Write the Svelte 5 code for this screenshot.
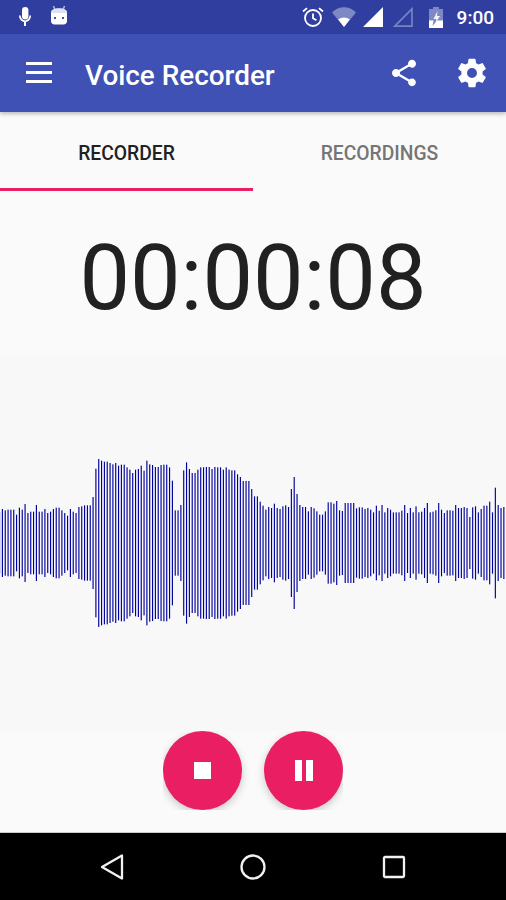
<script>
  // bar tops measured in 3x crops, relative to the crop; 280 is the centre line
  const tops = [
    188,178,182,180,180,180,195,174,180,163,190,186,186,166,186,186,178,190,186,178,174,174,182,190,198,178,186,190,172,170,167,167,167,142,57,28,33,36,36,40,44,40,48,45,45,53,60,70,60,58,48,63,33,44,46,52,52,46,45,45,53,
    93,182,182,166,62,38,58,70,70,60,53,53,52,52,58,52,53,53,60,53,60,62,62,74,82,94,94,94,118,140,140,156,168,180,172,175,162,175,178,170,167,172,118,82,133,166,172,172,185,172,176,185,195,195,185,158,158,162,154,182,184,
    160,160,160,160,176,173,173,178,175,180,188,168,183,166,188,175,180,188,188,188,183,166,190,175,188,170,188,186,175,160,188,186,182,160,180,190,182,182,183,166,175,175,172,175,202,173,170,188,178,168,168,156,188,114,166,175,172
  ];
  const pitch = 2.833;
  const bars = tops.map((t, i) => ({ x: i * pitch - 1, h: ((280 - t) * 2) / 3 }));
</script>

<div class="phone">
  <div class="status">
    <svg class="ic" width="24" height="24" viewBox="0 0 24 24" fill="#fff"><rect x="9" y="2" width="6.4" height="12.4" rx="3.2"/><path d="M6 10.5c0 3.6 2.6 6 5 6.4V21h2v-4.1c2.6-.4 5-2.800 5-6.400h-1.600c0 2.900-2.300 4.900-4.300 4.900S7.700 13.400 7.700 10.500z"/></svg>
    <svg class="ic droid" width="20" height="24" viewBox="0 0 20 24"><path d="M4.500 2l1.500 4M15.500 2l-1.500 4" stroke="#b9c0e4" stroke-width="1.400"/><path d="M2 9c0-3 2.500-4.500 8-4.500S18 6 18 9v8c0 2-1.500 3.500-3.500 3.500h-9C3.500 20.500 2 19 2 17z" fill="#fff"/><path d="M2 9c0-3 2.500-4.500 8-4.500S18 6 18 9z" fill="#dfe2f3"/><rect x="5" y="13" width="2" height="2" fill="#3f51b5"/><rect x="13" y="13" width="2" height="2" fill="#3f51b5"/></svg>
    <div class="spacer"></div>
    <svg class="ic alarm" width="22" height="24" viewBox="0 0 22 24" fill="none" stroke="#fff" stroke-width="1.800"><circle cx="11" cy="13" r="8"/><path d="M11 8.500V13.300l3.400 2M1 6.500l4-3.400M21 6.500l-4-3.400"/></svg>
    <svg class="ic wifi" width="24" height="20" viewBox="0 0 26 20" preserveAspectRatio="none"><path d="M0 5.500C7-1.500 19-1.500 26 5.500L13 20z" fill="#fff" fill-opacity=".38"/><path d="M6.700 12.500c3.600-2.800 9-2.800 12.600 0L13 20z" fill="#fff"/></svg>
    <svg class="ic sig" width="20" height="20" viewBox="0 0 20 20"><path d="M20 0v20H0z" fill="#fff"/></svg>
    <svg class="ic sig2" width="20" height="20" viewBox="0 0 20 20"><path d="M19 1.800v17.400H1.800z" fill="none" stroke="#fff" stroke-opacity=".35" stroke-width="1.700"/></svg>
    <svg class="ic batt" width="14" height="21" viewBox="0 0 14 21"><path d="M4 0h6v2h4v19H0V2h4z" fill="#fff" fill-opacity=".38"/><path d="M0 13.500h4.500L3.500 19l4.800-5.500H14V21H0z" fill="#fff"/><path d="M8.500 4L4.500 12h3l-1 4 4.500-7H8z" fill="#fff" fill-opacity=".9"/></svg>
    <span class="time">9:00</span>
  </div>

  <header class="bar">
    <button class="menu" aria-label="Menu"><span></span><span></span><span></span></button>
    <h1>Voice Recorder</h1>
    <svg class="share" width="32" height="32" viewBox="0 0 24 24" fill="#fff"><path d="M18 16.080c-.76 0-1.440.3-1.960.77L8.910 12.700c.05-.23.09-.46.09-.7s-.04-.47-.09-.7l7.050-4.110c.54.5 1.250.81 2.040.81 1.660 0 3-1.340 3-3s-1.340-3-3-3-3 1.340-3 3c0 .24.04.47.09.7L8.040 9.810C7.500 9.310 6.790 9 6 9c-1.660 0-3 1.340-3 3s1.340 3 3 3c.79 0 1.500-.31 2.040-.81l7.120 4.160c-.05.21-.08.43-.08.65 0 1.610 1.310 2.920 2.920 2.920 1.610 0 2.920-1.310 2.920-2.920s-1.310-2.920-2.920-2.920z"/></svg>
    <svg class="gear" width="34" height="34" viewBox="0 0 24 24" fill="#fff"><path d="M19.430 12.980c.04-.32.070-.64.070-.98s-.03-.66-.07-.98l2.110-1.650c.19-.15.24-.42.120-.64l-2-3.460c-.12-.22-.39-.3-.61-.22l-2.490 1c-.52-.4-1.080-.73-1.690-.98l-.38-2.650C14.460 2.180 14.250 2 14 2h-4c-.25 0-.46.18-.49.42l-.38 2.650c-.61.25-1.170.59-1.690.98l-2.490-1c-.23-.09-.49 0-.61.22l-2 3.460c-.13.22-.07.49.12.64l2.110 1.650c-.04.32-.07.65-.07.98s.03.66.07.98l-2.110 1.650c-.19.15-.24.42-.12.64l2 3.460c.12.22.39.3.61.22l2.490-1c.52.4 1.080.73 1.690.98l.38 2.650c.03.24.24.42.49.42h4c.25 0 .46-.18.49-.42l.38-2.650c.61-.25 1.170-.59 1.690-.98l2.490 1c.23.09.49 0 .61-.22l2-3.460c.12-.22.07-.49-.12-.64l-2.110-1.650zM12 15.500c-1.930 0-3.500-1.570-3.500-3.500s1.570-3.500 3.500-3.500 3.500 1.570 3.500 3.500-1.570 3.500-3.500 3.500z"/></svg>
  </header>

  <nav class="tabs">
    <div class="tab active">RECORDER</div>
    <div class="tab">RECORDINGS</div>
  </nav>

  <div class="timer">00:00:08</div>

  <div class="wave">
    <svg width="506" height="376" viewBox="0 0 506 376">
      {#each bars as b}
        <rect x={b.x} y={188 - b.h / 2} width="1.150" height={b.h} fill="#00009c" />
      {/each}
    </svg>
  </div>

  <div class="controls">
    <div class="fabs">
      <button class="fab" aria-label="Stop"><span class="stop"></span></button>
      <button class="fab" aria-label="Pause"><span class="pause"></span><span class="pause"></span></button>
    </div>
  </div>

  <footer class="nav">
    <svg width="26" height="28" viewBox="0 0 26 28" fill="none" stroke="#f2f2f2" stroke-width="2.300" stroke-linejoin="round"><path d="M23 2.500v23L3 14z"/></svg>
    <svg width="28" height="28" viewBox="0 0 28 28" fill="none" stroke="#f2f2f2" stroke-width="2.300"><circle cx="14" cy="14" r="11.500"/></svg>
    <svg width="26" height="26" viewBox="0 0 26 26" fill="none" stroke="#f2f2f2" stroke-width="2.300" stroke-linejoin="round"><rect x="3" y="3" width="20" height="20" rx="1"/></svg>
  </footer>
</div>

<style>
  :global(body) {
    margin: 0;
  }
  .phone {
    width: 506px;
    height: 900px;
    display: flex;
    flex-direction: column;
    background: #fafafa;
    font-family: Roboto, sans-serif;
    overflow: hidden;
  }
  .status {
    height: 34px;
    flex: none;
    display: flex;
    align-items: center;
    background: #303f9f;
    padding: 0 12px 0 13px;
    color: #fff;
  }
  .ic {
    flex: none;
  }
  .droid {
    margin: 0 0 2px 12px;
  }
  .spacer {
    flex: 1;
  }
  .wifi {
    margin-left: 8px;
  }
  .sig {
    margin-left: 7px;
  }
  .sig2 {
    margin-left: 10px;
  }
  .batt {
    margin-left: 16px;
  }
  .time {
    margin-left: 14px;
    font-size: 19px;
    font-weight: 500;
  }
  .bar {
    height: 78px;
    flex: none;
    display: flex;
    align-items: center;
    background: #3f51b5;
    box-shadow: 0 2px 4px rgba(0, 0, 0, 0.25);
    color: #fff;
    position: relative;
  }
  .menu {
    width: 26px;
    margin: 0 0 2px 26px;
    padding: 0;
    border: none;
    background: none;
    display: flex;
    flex-direction: column;
    gap: 6px;
  }
  .menu span {
    height: 3px;
    background: #fff;
  }
  h1 {
    margin: 0 0 0 33px;
    padding-top: 4px;
    flex: 1;
    font-size: 27.900px;
    font-weight: 500;
  }
  .share {
    margin-right: 35px;
  }
  .gear {
    margin-right: 17px;
  }
  .tabs {
    height: 79px;
    flex: none;
    display: grid;
    grid-template-columns: 1fr 1fr;
  }
  .tab {
    display: flex;
    align-items: center;
    justify-content: center;
    font-size: 19.300px;
    font-weight: 500;
    color: #757575;
    padding: 6px 0 3px;
  }
  .tab.active {
    color: #212121;
    border-bottom: 3px solid #e91e63;
    padding-bottom: 0;
  }
  .timer {
    height: 164px;
    flex: none;
    display: flex;
    align-items: center;
    justify-content: center;
    font-size: 90px;
    color: #212121;
    padding-top: 10px;
    box-sizing: border-box;
  }
  .wave {
    height: 376px;
    flex: none;
    background: #f8f8f8;
  }
  .wave svg {
    display: block;
  }
  .controls {
    flex: 1;
    display: flex;
    justify-content: center;
    align-items: flex-start;
  }
  .fabs {
    width: 180px;
    height: 79px;
    display: flex;
    justify-content: space-between;
    overflow: hidden;
  }
  .fab {
    width: 79px;
    height: 79px;
    padding: 0;
    border: none;
    border-radius: 50%;
    background: #e91e63;
    box-shadow: 0 3px 8px rgba(0, 0, 0, 0.2);
    display: flex;
    align-items: center;
    justify-content: center;
    gap: 4px;
  }
  .stop {
    width: 17px;
    height: 17px;
    background: #fff;
  }
  .pause {
    width: 7px;
    height: 21px;
    background: #fff;
  }
  .nav {
    height: 68px;
    flex: none;
    box-sizing: border-box;
    background: #000;
    border-top: 1px solid #ccc;
    display: flex;
    align-items: center;
    justify-content: space-between;
    padding: 0 99px;
  }
</style>
